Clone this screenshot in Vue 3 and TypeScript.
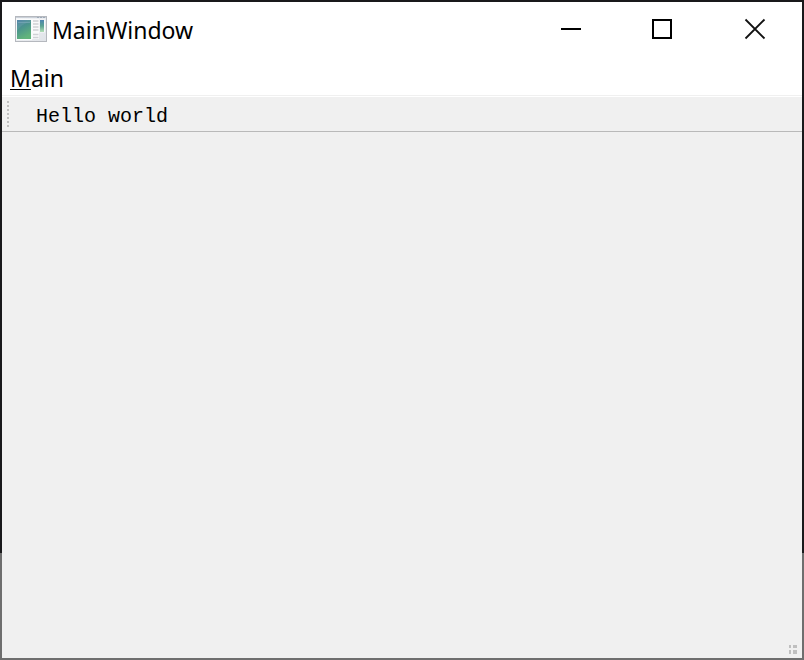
<script setup lang="ts">
import { ref } from 'vue'

const title = ref<string>('MainWindow')
const gripDots: number[] = [0, 1, 2, 3, 4, 5, 6]
</script>

<template>
  <div class="frame">
    <div class="window">
      <header class="titlebar">
        <svg class="app-icon" viewBox="0 0 32 26" aria-hidden="true">
          <defs>
            <linearGradient id="pane" x1="0" y1="0" x2="0.4" y2="1">
              <stop offset="0" stop-color="#467ba3" />
              <stop offset="0.5" stop-color="#4c968c" />
              <stop offset="1" stop-color="#62b47c" />
            </linearGradient>
            <linearGradient id="strip" x1="0" y1="0" x2="0" y2="1">
              <stop offset="0" stop-color="#4d84b0" />
              <stop offset="0.5" stop-color="#5ba392" />
              <stop offset="1" stop-color="#b5dfb8" />
            </linearGradient>
            <linearGradient id="shell" x1="0" y1="0" x2="1" y2="1">
              <stop offset="0" stop-color="#f5f6f8" />
              <stop offset="1" stop-color="#e0e3e8" />
            </linearGradient>
          </defs>
          <rect x="0.5" y="0.5" width="31" height="25" fill="url(#shell)" stroke="#b5b8be" />
          <path d="M1 1.5H31" stroke="#c9d0d8" />
          <path d="M22 1.5H30" stroke="#9eaab8" stroke-dasharray="2 1" />
          <rect x="1.5" y="3" width="15.5" height="21" fill="#f9fbfc" />
          <rect x="2" y="4" width="14" height="19" fill="url(#pane)" />
          <path d="M2 15C6 9 10 7 16 6V4H2Z" fill="#ffffff" opacity="0.08" />
          <path d="M3 6.5H15" stroke="#8ab2c3" opacity="0.5" />
          <rect x="17" y="3" width="7" height="20" fill="#fafafb" />
          <path d="M18 5H23.5M18 8H23.5M18 11H23.5M18 14H23.5M18 18.5H23.5M18 21.5H23.5" stroke="#cfd1d5" stroke-width="1.5" />
          <rect x="24.5" y="3.5" width="5.5" height="13" fill="#f9fafb" />
          <rect x="25" y="4" width="4" height="12" fill="url(#strip)" />
        </svg>
        <h1 class="title">{{ title }}</h1>
        <div class="controls">
          <button type="button" class="control" aria-label="Minimize">
            <svg viewBox="0 0 22 22"><path d="M1 11H21" stroke="#000" stroke-width="2" /></svg>
          </button>
          <button type="button" class="control" aria-label="Maximize">
            <svg viewBox="0 0 22 22"><rect x="1" y="2" width="18" height="18" fill="none" stroke="#000" stroke-width="2" /></svg>
          </button>
          <button type="button" class="control" aria-label="Close">
            <svg viewBox="0 0 22 22"><path d="M1.5 1.5L20.5 20.5M20.5 1.5L1.5 20.5" stroke="#111" stroke-width="1.8" /></svg>
          </button>
        </div>
      </header>
      <nav class="menubar">
        <button type="button" class="menu"><span class="mnemonic">M</span>ain</button>
      </nav>
      <div class="toolbar" role="toolbar">
        <div class="handle" aria-hidden="true">
          <span v-for="dot in gripDots" :key="dot" class="dot"></span>
        </div>
        <button type="button" class="action">Hello world</button>
      </div>
      <main class="content"></main>
      <footer class="statusbar">
        <svg class="size-grip" viewBox="0 0 8 9" aria-hidden="true">
          <path d="M0 0H2V3H0ZM4 0H8V3H4ZM0 5H2V9H0ZM4 5H8V9H4Z" fill="#bfbfbf" />
        </svg>
      </footer>
    </div>
  </div>
</template>

<style>
body {
  margin: 0;
}
</style>

<style scoped>
.frame {
  box-sizing: border-box;
  display: flex;
  min-height: 100vh;
  padding: 2px;
  background: linear-gradient(#19191b 0 83.8%, #6e6e6e 83.8% 100%);
}

.window {
  flex: 1;
  display: flex;
  flex-direction: column;
  background: #f0f0f0;
  color: #000;
  font-family: "Noto Sans", "Open Sans", sans-serif;
}

button {
  margin: 0;
  border: 0;
  background: none;
  color: inherit;
  font: inherit;
}

.titlebar {
  display: flex;
  align-items: center;
  height: 54px;
  padding: 0 1px 0 13px;
  background: #fff;
}

.app-icon {
  width: 32px;
  height: 26px;
}

.title {
  margin: 0 0 0 5px;
  padding-top: 2px;
  font-size: 23px;
  font-weight: 400;
  line-height: 32px;
}

.controls {
  display: flex;
  align-self: stretch;
  margin-left: auto;
}

.control {
  display: flex;
  align-items: center;
  justify-content: center;
  width: 92px;
  padding: 0;
}

.control svg {
  width: 22px;
  height: 22px;
}

.menubar {
  display: flex;
  align-items: center;
  height: 39px;
  border-bottom: 1px solid #f0f0f0;
  background: #fff;
}

.menu {
  padding: 4px 8px 0;
  font-size: 23px;
  line-height: 32px;
}

.mnemonic {
  text-decoration: underline;
  text-decoration-thickness: 1px;
  text-underline-offset: 2px;
}

.toolbar {
  display: flex;
  align-items: center;
  height: 34px;
  border-top: 1px solid #fff;
  border-bottom: 1px solid #b9b9b9;
}

.handle {
  display: flex;
  flex-direction: column;
  gap: 2px;
  padding-left: 5px;
}

.dot {
  width: 2px;
  height: 2px;
  background: #c0c0c0;
}

.action {
  padding: 6px 27px 0;
  font-family: "Liberation Mono", monospace;
  font-size: 20px;
  line-height: 28px;
}

.content {
  flex: 1;
}

.statusbar {
  display: flex;
  justify-content: flex-end;
  padding: 4px 5px;
}

.size-grip {
  width: 8px;
  height: 9px;
}
</style>
